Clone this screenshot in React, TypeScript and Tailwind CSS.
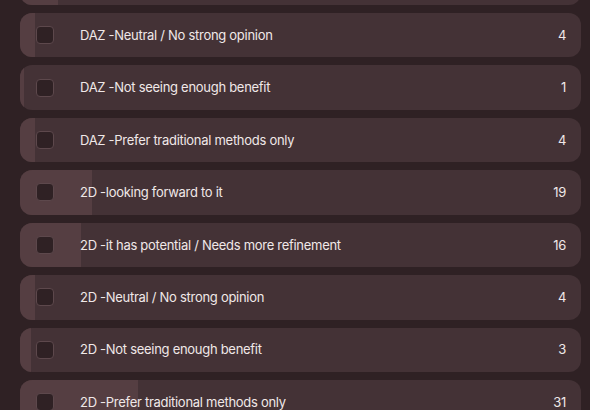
import React from 'react'

interface Answer {
  id: string
  label: string
  count: number
}

const TOTAL = 148

const answers: Answer[] = [
  { id: 'daz-potential', label: 'DAZ -it has potential / Needs more refinement', count: 10 },
  { id: 'daz-neutral', label: 'DAZ -Neutral / No strong opinion', count: 4 },
  { id: 'daz-benefit', label: 'DAZ -Not seeing enough benefit', count: 1 },
  { id: 'daz-traditional', label: 'DAZ -Prefer traditional methods only', count: 4 },
  { id: '2d-forward', label: '2D -looking forward to it', count: 19 },
  { id: '2d-potential', label: '2D -it has potential / Needs more refinement', count: 16 },
  { id: '2d-neutral', label: '2D -Neutral / No strong opinion', count: 4 },
  { id: '2d-benefit', label: '2D -Not seeing enough benefit', count: 3 },
  { id: '2d-traditional', label: '2D -Prefer traditional methods only', count: 31 },
]

function AnswerRow({ answer }: { answer: Answer }) {
  const pct = (answer.count / TOTAL) * 100
  return (
    <div className="relative h-[44.43px] shrink-0 overflow-hidden rounded-[12px] bg-[#443236]">
      {/* vote share bar */}
      <div className="absolute inset-y-0 left-0 bg-[#553e42]" style={{ width: `${pct}%` }} />
      <div className="relative flex h-full items-center pl-4 pr-[15px]">
        <span className="h-[18px] w-[18px] shrink-0 rounded-[4px] border border-[#5d484c] bg-[#2f2124]" />
        <span className="ml-[26px] flex-1 pt-px text-[13px] tracking-[-0.022em] text-[#f0e8e8]">
          {answer.label}
        </span>
        <span className="pt-px text-[13px] tracking-[-0.022em] text-[#f0e8e8]">{answer.count}</span>
      </div>
    </div>
  )
}

export default function App() {
  return (
    <div
      className="h-[410px] w-[590px] overflow-hidden bg-[#2f2124]"
      style={{ fontFamily: 'Inter, "Noto Sans", sans-serif' }}
    >
      <div className="-mt-[39.43px] flex flex-col gap-2 pl-5 pr-[9px]">
        {answers.map((a) => (
          <AnswerRow key={a.id} answer={a} />
        ))}
      </div>
    </div>
  )
}
